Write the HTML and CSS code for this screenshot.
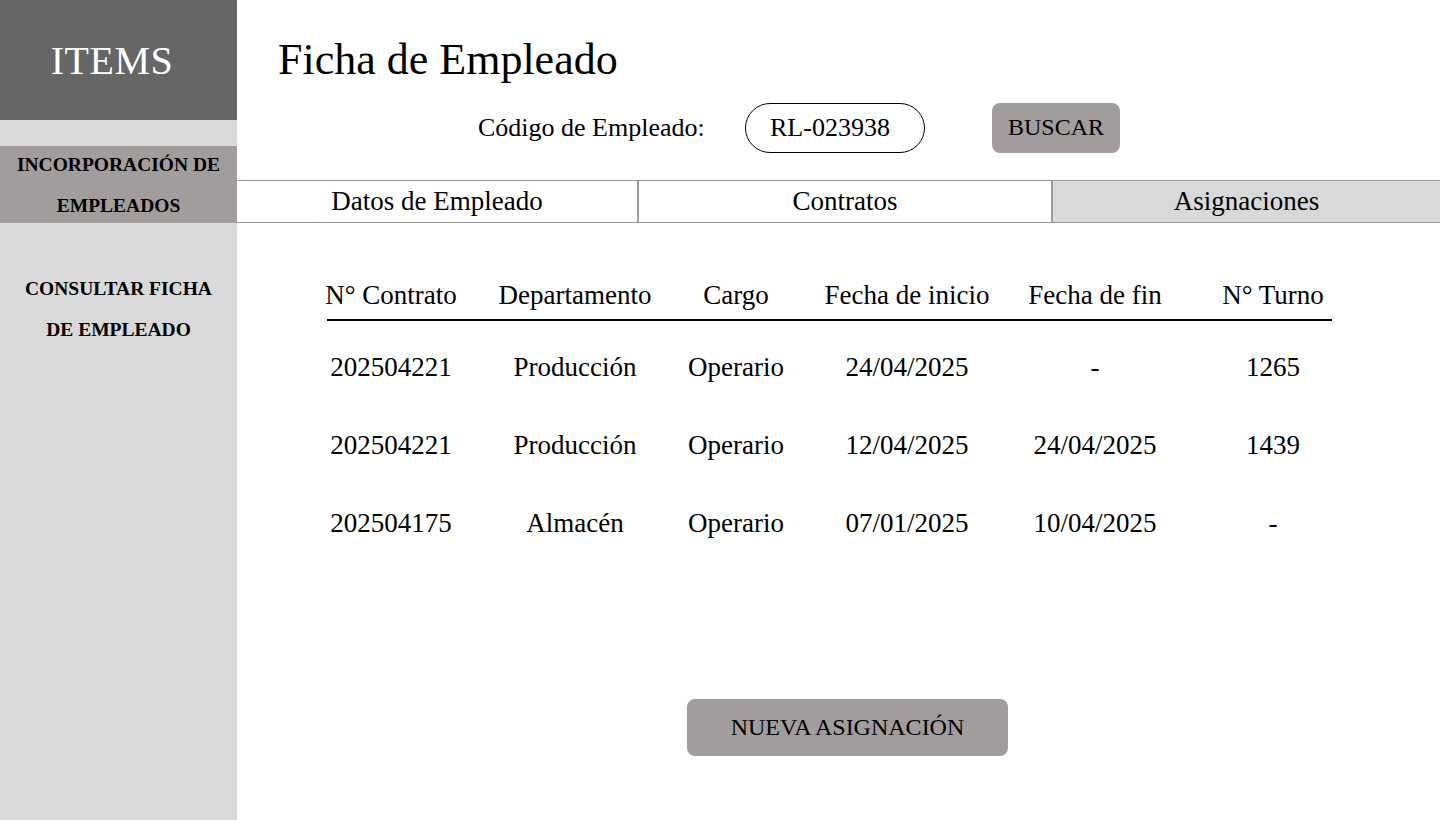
FILE: index.html
```html
<!DOCTYPE html>
<html lang="es">
<head>
<meta charset="utf-8">
<title>Ficha de Empleado</title>
<link rel="stylesheet" href="styles.css">
</head>
<body>
<div class="app">
  <aside class="sidebar">
    <div class="brand">ITEMS</div>
    <nav class="nav">
      <a class="nav-item active">INCORPORACIÓN DE<br>EMPLEADOS</a>
      <a class="nav-item second">CONSULTAR FICHA<br>DE EMPLEADO</a>
    </nav>
  </aside>
  <main class="main">
    <h1 class="title">Ficha de Empleado</h1>
    <div class="search">
      <label class="search-label">Código de Empleado:</label>
      <div class="search-input">RL-023938</div>
      <button class="btn btn-search">BUSCAR</button>
    </div>
    <div class="tabs">
      <div class="tab">Datos de Empleado</div>
      <div class="tab">Contratos</div>
      <div class="tab selected">Asignaciones</div>
    </div>
    <div class="table">
      <div class="row head">
        <div class="cell">N° Contrato</div>
        <div class="cell">Departamento</div>
        <div class="cell">Cargo</div>
        <div class="cell">Fecha de inicio</div>
        <div class="cell">Fecha de fin</div>
        <div class="cell last">N° Turno</div>
      </div>
      <div class="row first">
        <div class="cell">202504221</div>
        <div class="cell">Producción</div>
        <div class="cell">Operario</div>
        <div class="cell">24/04/2025</div>
        <div class="cell">-</div>
        <div class="cell last">1265</div>
      </div>
      <div class="row">
        <div class="cell">202504221</div>
        <div class="cell">Producción</div>
        <div class="cell">Operario</div>
        <div class="cell">12/04/2025</div>
        <div class="cell">24/04/2025</div>
        <div class="cell last">1439</div>
      </div>
      <div class="row">
        <div class="cell">202504175</div>
        <div class="cell">Almacén</div>
        <div class="cell">Operario</div>
        <div class="cell">07/01/2025</div>
        <div class="cell">10/04/2025</div>
        <div class="cell last">-</div>
      </div>
    </div>
    <button class="btn btn-new">NUEVA ASIGNACIÓN</button>
  </main>
</div>
</body>
</html>
```

FILE: styles.css
```css
* { box-sizing: border-box; }
html, body { margin: 0; padding: 0; }
body {
  font-family: "Liberation Serif", "Times New Roman", serif;
  color: #000;
  background: #fff;
  width: 1440px;
  height: 820px;
  overflow: hidden;
}
.app {
  display: flex;
  height: 820px;
}
.sidebar {
  width: 237px;
  flex: none;
  background: #d9d9d9;
  display: flex;
  flex-direction: column;
}
.brand {
  height: 120px;
  background: #666666;
  color: #fff;
  font-size: 40px;
  display: flex;
  align-items: center;
  justify-content: center;
  padding-right: 13px;
  letter-spacing: 0.5px;
}
.nav {
  display: flex;
  flex-direction: column;
  margin-top: 26px;
}
.nav-item {
  height: 77px;
  display: flex;
  align-items: center;
  justify-content: center;
  text-align: center;
  font-weight: bold;
  font-size: 19.5px;
  line-height: 41px;
  color: #000;
  padding-top: 1px;
}
.nav-item.active { background: #a29d9d; }
.nav-item.second { margin-top: 47px; }

.main {
  flex: 1;
  display: flex;
  flex-direction: column;
}
.title {
  margin: 35px 0 0 41px;
  font-size: 44px;
  line-height: 50px;
  font-weight: normal;
}
.search {
  margin-top: 17px;
  margin-left: 241px;
  display: grid;
  grid-template-columns: 267px 180px 128px;
  align-items: center;
  height: 50px;
}
.search-label {
  font-size: 26px;
}
.search-input {
  height: 50px;
  border: 1px solid #000;
  border-radius: 25px;
  font-size: 26px;
  padding-left: 24px;
  display: flex;
  align-items: center;
  margin-top: 1px;
}
.btn {
  font-family: inherit;
  color: #000;
  background: #a29d9d;
  border: none;
  border-radius: 8px;
  font-size: 24px;
  padding: 0;
}
.btn-search {
  width: 128px;
  height: 50px;
  margin-left: 67px;
}
.tabs {
  margin-top: 28px;
  display: grid;
  grid-template-columns: 400px 414px 1fr;
  height: 43px;
  border-top: 1px solid #999;
  border-bottom: 1px solid #999;
}
.tab {
  display: flex;
  align-items: center;
  justify-content: center;
  font-size: 27px;
}
.tab + .tab { border-left: 2px solid #a09a9a; }
.tab.selected { background: #d9d9d9; }

.table {
  margin-top: 48px;
  margin-left: 90px;
  width: 1005px;
}
.row {
  display: grid;
  grid-template-columns: 128px 240px 82px 260px 116px 179px;
  height: 78px;
  align-items: center;
}
.row.head {
  height: 50px;
  border-bottom: 2px solid #000;
}
.row.first { margin-top: 7px; }
.cell {
  display: flex;
  justify-content: center;
  white-space: nowrap;
  font-size: 27px;
}
.cell.last { padding-left: 61px; }

.btn-new {
  align-self: flex-start;
  margin-top: 137px;
  margin-left: 450px;
  width: 321px;
  height: 57px;
}
```
